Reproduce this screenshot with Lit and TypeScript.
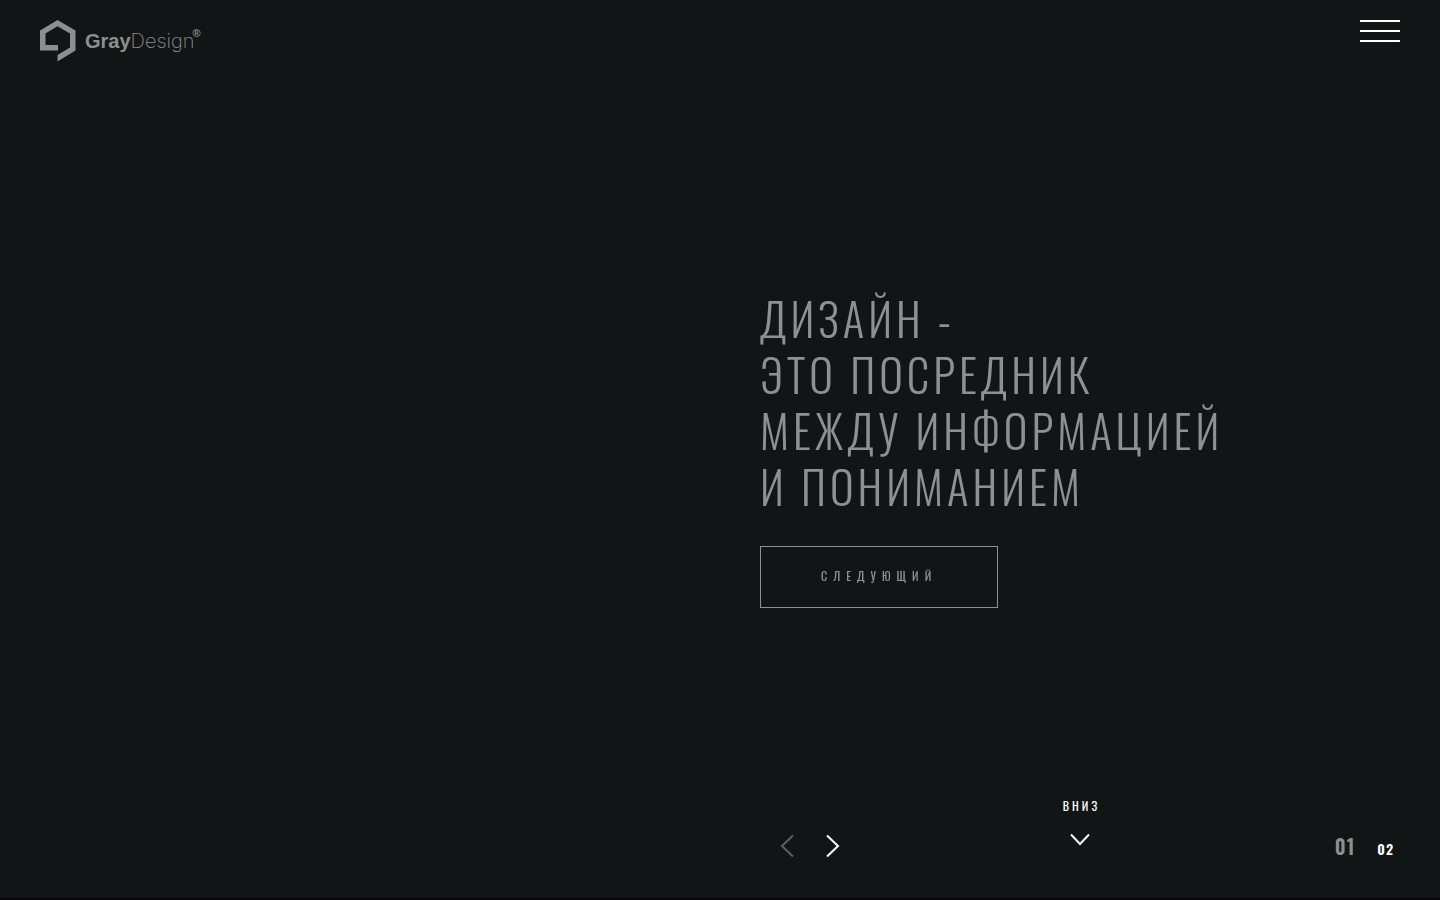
import { LitElement, html, css } from "lit";
import { customElement, state } from "lit/decorators.js";

const SLIDES = ["01", "02"];

@customElement("app-root")
export class AppRoot extends LitElement {
  static styles = css`
    :host {
      display: block;
      --bg: #111516;
      --muted: #8d8f8f;
      font-family: "Oswald", "Liberation Sans Narrow", "Roboto", sans-serif;
      color: #fff;
      background: var(--bg);
    }
    *, *::before, *::after { box-sizing: border-box; }
    button { font: inherit; color: inherit; background: none; border: 0; padding: 0; cursor: pointer; }
    a { color: inherit; text-decoration: none; }
    svg { display: block; fill: none; stroke: currentColor; }

    .page {
      min-height: 100vh;
      display: grid;
      grid-template-rows: 1fr auto 1fr;
      box-shadow: inset 0 -2px #0b060c;
    }
    .top {
      display: flex;
      justify-content: space-between;
      align-items: flex-start;
      padding: 20px 40px;
    }
    .logo {
      display: flex;
      align-items: center;
      color: var(--muted);
      font-family: "Liberation Sans", sans-serif;
      font-size: 20px;
      line-height: 40px;
    }
    .logo svg { margin-right: 9px; fill: currentColor; stroke: none; }
    .logo b { font-weight: 700; }
    .logo span { font-family: "Inter", sans-serif; font-weight: 200; }
    .logo sup { margin-left: -2px; font-size: 11px; line-height: 10px; font-weight: 700; align-self: flex-start; padding-top: 8px; }
    .burger { display: grid; gap: 8px; width: 40px; }
    .burger i { height: 2px; background: #fff; }

    .hero { display: grid; grid-template-columns: 1fr 1fr; }
    .copy { grid-column: 2; padding: 0 0 2px 40px; opacity: 0.53; will-change: opacity; }
    h1 {
      margin: 0 0 32px;
      font-size: 45px;
      line-height: 56px;
      font-weight: 300;
      letter-spacing: 4px;
      text-transform: uppercase;
      white-space: nowrap;
    }
    .next {
      display: block;
      height: 62px;
      padding: 0 60px 4px;
      border: 1px solid currentColor;
      font-size: 12px;
      letter-spacing: 6px;
      text-transform: uppercase;
    }

    .bottom { display: grid; grid-template-columns: 1fr 1fr; align-items: end; }
    .controls {
      grid-column: 2;
      display: grid;
      grid-template-columns: 1fr auto 1fr;
      align-items: end;
      padding: 0 40px 42px;
    }
    .arrows { display: flex; gap: 30px; padding-left: 20px; }
    .arrows button:disabled { color: #5c5f60; cursor: default; }
    .down {
      display: grid;
      justify-items: center;
      gap: 17px;
      padding-bottom: 12px;
      font-size: 12px;
      line-height: 20px;
      letter-spacing: 3px;
      text-indent: 3px;
      text-transform: uppercase;
    }
    .count {
      display: flex;
      justify-content: flex-end;
      align-items: baseline;
      gap: 22px;
      padding-right: 6px;
      font-weight: 600;
      letter-spacing: 1px;
      font-size: 14px;
      line-height: 18px;
    }
    .count .current { font-size: 20px; color: var(--muted); }
  `;

  @state() private index = 0;

  private go(step: number) {
    this.index = Math.min(SLIDES.length - 1, Math.max(0, this.index + step));
  }

  render() {
    return html`
      <div class="page">
        <header class="top">
          <a class="logo" href="#home">
            <svg width="36" height="42" viewBox="0 0 36 42" aria-hidden="true">
              <path d="M17.500 0 35.500 10.500V30.500L17.500 41.500V35L30 27.500V13.500L17.500 6.200 5.500 13.500V25H18V30.500H0V10.500Z" />
            </svg>
            <b>Gray</b><span>Design</span><sup>®</sup>
          </a>
          <button class="burger" aria-label="Меню"><i></i><i></i><i></i></button>
        </header>
        <main class="hero">
          <div class="copy">
            <h1>Дизайн -<br />это посредник<br />между информацией<br />и пониманием</h1>
            <button class="next" @click=${() => this.go(1)}>Следующий</button>
          </div>
        </main>
        <footer class="bottom">
          <div class="controls">
            <div class="arrows">
              <button aria-label="Назад" ?disabled=${this.index === 0} @click=${() => this.go(-1)}>
                <svg width="15" height="24" viewBox="0 0 15 24" stroke-width="2"><path d="M13 1.500 2 12 13 22.500" /></svg>
              </button>
              <button aria-label="Вперёд" ?disabled=${this.index === SLIDES.length - 1} @click=${() => this.go(1)}>
                <svg width="15" height="24" viewBox="0 0 15 24" stroke-width="2"><path d="M2 1.500 13 12 2 22.500" /></svg>
              </button>
            </div>
            <a class="down" href="#next">
              <span>Вниз</span>
              <svg width="20" height="13" viewBox="0 0 20 13" stroke-width="2"><path d="M1 1.500 10 11 19 1.500" /></svg>
            </a>
            <div class="count">
              ${SLIDES.map((n, i) => html`<span class=${i === this.index ? "current" : ""}>${n}</span>`)}
            </div>
          </div>
        </footer>
      </div>
    `;
  }
}
